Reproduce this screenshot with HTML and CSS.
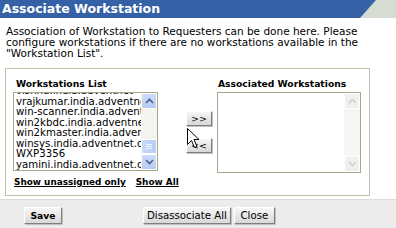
FILE: index.html
```html
<!DOCTYPE html>
<html lang="en">
<head>
    <meta charset="UTF-8">
    <title>Associate Workstation</title>
    <link rel="stylesheet" href="styles.css">
</head>
<body>
    <div class="titlebar">
        <div class="title">Associate Workstation</div>
    </div>

    <p class="desc">Association of Workstation to Requesters can be done here. Please configure workstations if there are no workstations available in the "Workstation List".</p>

    <div class="panel">
        <div class="col">
            <div class="label">Workstations List</div>
            <div class="listbox">
                <div class="items">
                    <div class="item">vishnu.india.adventnet</div>
                    <div class="item">vrajkumar.india.adventnet.com</div>
                    <div class="item">win-scanner.india.adventnet.com</div>
                    <div class="item">win2kbdc.india.adventnet.com</div>
                    <div class="item">win2kmaster.india.adventnet.com</div>
                    <div class="item">winsys.india.adventnet.com</div>
                    <div class="item">WXP3356</div>
                    <div class="item">yamini.india.adventnet.com</div>
                </div>
                <div class="scrollbar">
                    <div class="arrow up"><svg width="9" height="6" viewBox="0 0 9 6"><path d="M1 5 L4.5 1.5 L8 5" fill="none" stroke="#4d6185" stroke-width="1.6"/></svg></div>
                    <div class="track"><div class="thumb"><span></span><span></span><span></span></div></div>
                    <div class="arrow down"><svg width="9" height="6" viewBox="0 0 9 6"><path d="M1 1 L4.5 4.5 L8 1" fill="none" stroke="#4d6185" stroke-width="1.6"/></svg></div>
                </div>
            </div>
            <div class="links">
                <a href="#">Show unassigned only</a>
                <a href="#">Show All</a>
            </div>
        </div>

        <div class="moves">
            <button class="btn small">&gt;&gt;</button>
            <button class="btn small">&lt;&lt;</button>
            <svg class="cursor" width="13" height="21" viewBox="0 0 13 21">
                <path d="M0.5 0.5 L0.5 16.5 L4.5 12.5 L7.5 19.5 L10 18.5 L7 11.5 L12 11.5 Z" fill="#fff" stroke="#000" stroke-width="1"/>
            </svg>
        </div>

        <div class="col right">
            <div class="label">Associated Workstations</div>
            <div class="listbox empty">
                <div class="items"></div>
                <div class="scrollbar off">
                    <div class="arrow up"><svg width="9" height="6" viewBox="0 0 9 6"><path d="M1 5 L4.5 1.5 L8 5" fill="none" stroke="#c9cdd0" stroke-width="1.4"/></svg></div>
                    <div class="track"></div>
                    <div class="arrow down"><svg width="9" height="6" viewBox="0 0 9 6"><path d="M1 1 L4.5 4.5 L8 1" fill="none" stroke="#c9cdd0" stroke-width="1.4"/></svg></div>
                </div>
            </div>
        </div>
    </div>

    <div class="footer">
        <button class="btn save">Save</button>
        <div class="footer-right">
            <button class="btn">Disassociate All</button>
            <button class="btn close">Close</button>
        </div>
    </div>
</body>
</html>
```

FILE: styles.css
```css
body {
    margin: 0;
    font-family: "DejaVu Sans", Verdana, sans-serif;
    font-size: 10.5px;
    color: #000;
    background-color: #fff;
    width: 396px;
    height: 228px;
    overflow: hidden;
}

/* Title bar with the slanted end */
.titlebar {
    height: 18px;
    background-color: #d5ddd3;
}

.title {
    width: 376px;
    height: 18px;
    background-color: #3562a6;
    clip-path: polygon(0 0, 100% 0, calc(100% - 16px) 100%, 0 100%);
    color: #fff;
    font-weight: bold;
    font-size: 12.5px;
    line-height: 18px;
    padding-left: 2px;
    box-sizing: border-box;
}

.desc {
    margin: 8px 6px 0 6px;
    line-height: 11px;
    width: 376px;
}

.panel {
    margin: 9px 0 0 5px;
    width: 365px;
    height: 128px;
    box-sizing: border-box;
    border: 1px solid #bfc3ad;
    display: flex;
    padding: 9px 0 0 7px;
}

.col {
    display: flex;
    flex-direction: column;
    flex: none;
    width: 145px;
}

.col.right {
    width: 144px;
}

.label {
    font-weight: bold;
    font-size: 9.2px;
    line-height: 11px;
    padding-left: 3px;
    margin-bottom: 3px;
    white-space: nowrap;
}

.right .label {
    padding-left: 1px;
}

.listbox {
    width: 145px;
    height: 79px;
    box-sizing: border-box;
    border: 1px solid #a4a888;
    display: flex;
    overflow: hidden;
}

.listbox.empty {
    width: 144px;
    height: 81px;
}

.items {
    flex: 1;
    min-width: 0;
    overflow: hidden;
    padding-left: 2px;
    margin-top: -7px;
}

.item {
    line-height: 10.5px;
    font-size: 10.2px;
    white-space: nowrap;
}

.scrollbar {
    width: 16px;
    flex: none;
    display: flex;
    flex-direction: column;
    background-color: #f4f4f0;
}

.arrow {
    height: 16px;
    background: linear-gradient(#cddcfb, #b6cbf5);
    border: 1px solid #fff;
    border-radius: 2px;
    box-sizing: border-box;
    display: flex;
    align-items: center;
    justify-content: center;
}

.track {
    flex: 1;
    position: relative;
}

.thumb {
    position: absolute;
    left: 0;
    right: 0;
    bottom: 0;
    height: 15px;
    background: linear-gradient(to right, #cad9fa, #b9cdf6);
    border: 1px solid #fff;
    border-radius: 2px;
    box-sizing: border-box;
    display: flex;
    flex-direction: column;
    align-items: center;
    justify-content: center;
    gap: 1px;
}

.thumb span {
    width: 6px;
    height: 1px;
    background-color: #eef3fd;
}

.scrollbar.off {
    background-color: #f6f6f4;
}

.scrollbar.off .arrow {
    background: #f0f0ee;
}

.links {
    margin-top: 6px;
    padding-left: 1px;
    display: flex;
    gap: 10px;
    white-space: nowrap;
    font-size: 8.9px;
}

.links a {
    color: #000;
    font-weight: bold;
    text-decoration: underline;
}

.moves {
    width: 59px;
    flex: none;
    position: relative;
    display: flex;
    flex-direction: column;
    align-items: flex-start;
    padding: 33px 0 0 28px;
    box-sizing: border-box;
    gap: 12px;
}

.btn {
    font-family: "DejaVu Sans", Verdana, sans-serif;
    font-size: 10.2px;
    height: 17px;
    padding: 0 3px;
    background: linear-gradient(#f7f7f7, #d8d8d8);
    border: 1px solid #fff;
    border-right-color: #808080;
    border-bottom-color: #808080;
    box-shadow: 1px 1px 0 #c0c0c0;
    color: #000;
    cursor: pointer;
}

.btn.small {
    width: 26px;
    height: 15px;
    padding: 0;
    font-size: 9.5px;
    line-height: 12px;
}

.cursor {
    position: absolute;
    left: 29px;
    top: 50px;
}

.footer {
    margin-top: 3px;
    height: 30px;
    background-color: #ececec;
    border-top: 1px solid #dcdcdc;
    display: flex;
    align-items: center;
    padding-left: 24px;
}

.btn.save {
    font-weight: bold;
    font-size: 9.2px;
    width: 38px;
    padding: 0;
}

.footer-right {
    margin-left: 81px;
    display: flex;
    gap: 3px;
}

.btn.close {
    width: 41px;
    padding: 0;
}
```
